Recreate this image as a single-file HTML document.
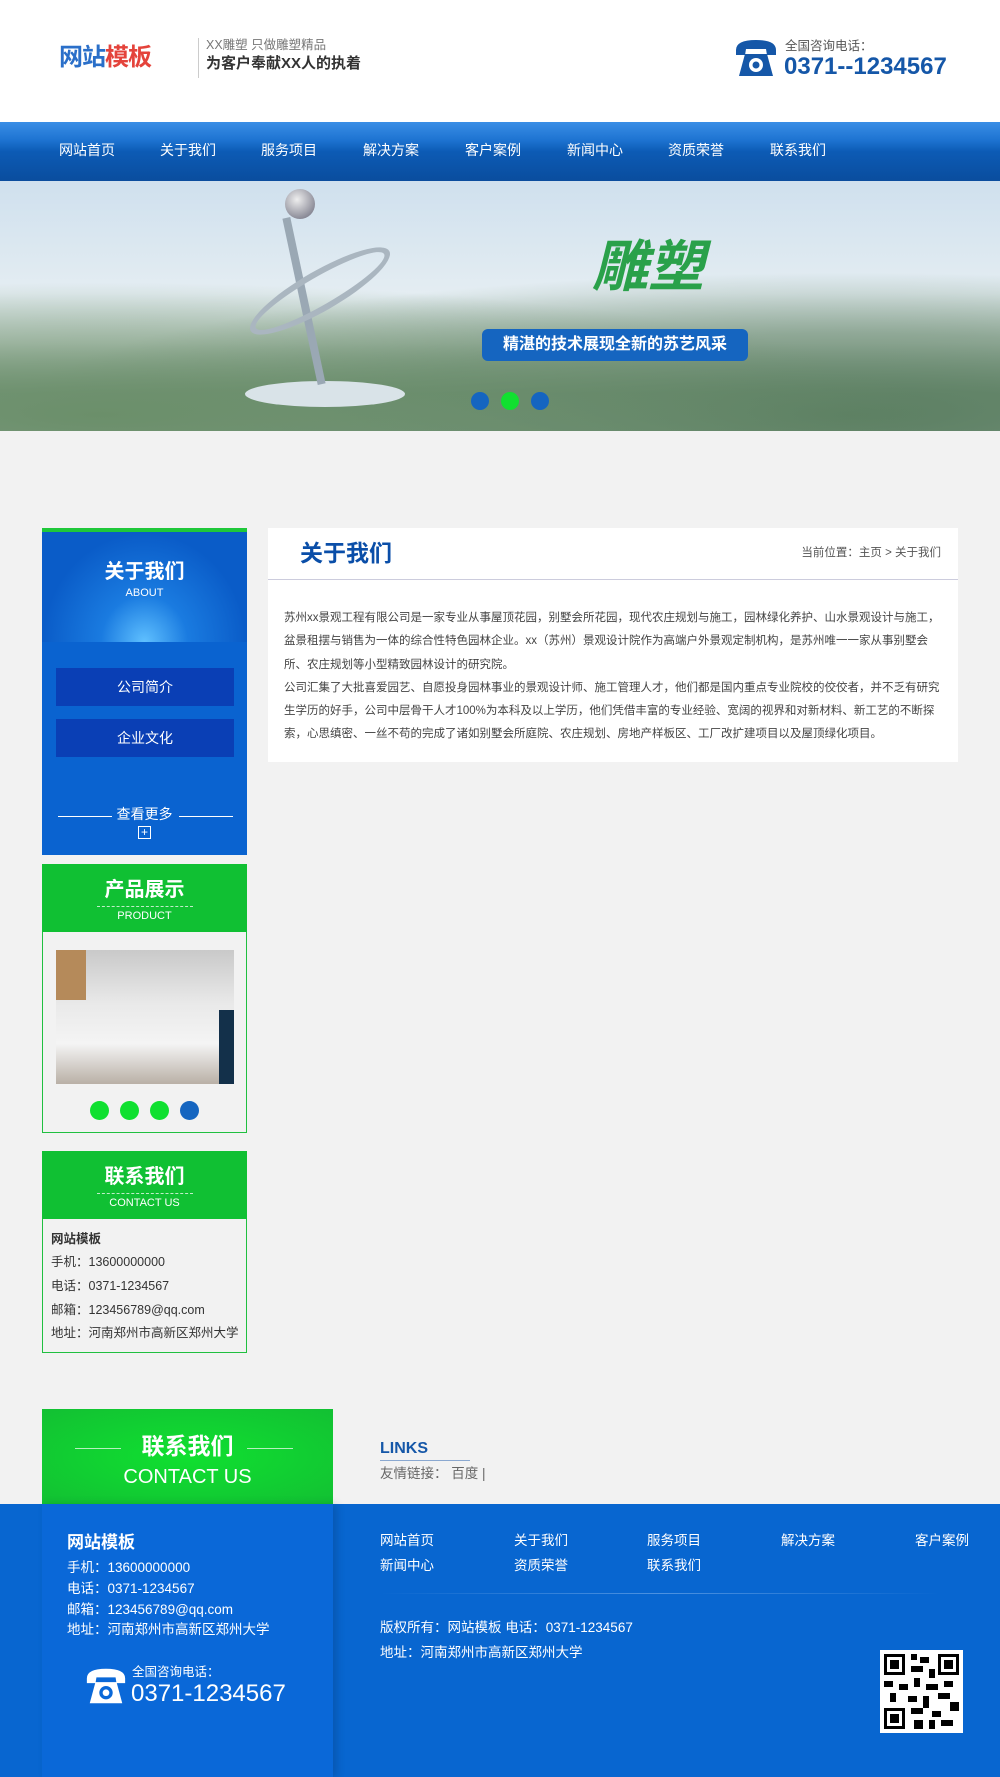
<!DOCTYPE html>
<html><head><meta charset="utf-8"><style>
*{margin:0;padding:0;box-sizing:border-box}
body{width:1000px;height:1777px;background:#f2f2f2;font-family:"Liberation Sans","Noto Sans CJK SC",sans-serif;position:relative;overflow:hidden}
.a{position:absolute;white-space:nowrap;line-height:1.2}
.hdr{left:0;top:0;width:1000px;height:122px;background:#fff}
.nav{left:0;top:122px;width:1000px;height:59px;background:linear-gradient(#3a8ee6 0,#1e74d2 30%,#0c5bb5 50%,#0a4d9e 100%)}
.nav span{position:absolute;top:20px;color:#fff;font-size:14px}
.ban{left:0;top:181px;width:1000px;height:250px;background:linear-gradient(180deg,#cfe0ee 0,#e4edf2 45%,#c9d6d0 65%,#7f9c86 85%,#8fa89a 100%);overflow:hidden}
.side{left:42px;width:205px}
.w{color:#fff}
.ct{color:#333;font-size:12.5px}
.fn span{position:absolute;color:#fff;font-size:13.5px;white-space:nowrap}
</style></head><body>
<div class="a hdr">
 <div class="a" style="left:59px;top:44px;font-size:24px;font-weight:bold;letter-spacing:-1px"><span style="color:#2a6fc9">网站</span><span style="color:#e4433b">模板</span></div>
 <div class="a" style="left:198px;top:38px;width:1px;height:40px;background:#ccc"></div>
 <div class="a" style="left:206px;top:38px;font-size:12.5px;color:#777">XX雕塑 只做雕塑精品</div>
 <div class="a" style="left:206px;top:55px;font-size:15px;color:#333;font-weight:bold">为客户奉献XX人的执着</div>
 <svg class="a" style="left:733px;top:38px" width="46" height="40" viewBox="0 0 46 40"><path d="M3 12 Q3 2 23 2 Q43 2 43 12 L43 17 L34 17 L33 11 L13 11 L12 17 L3 17Z" fill="#1557a8"/><path d="M12 16 L34 16 L40 38 L6 38Z" fill="#1557a8"/><circle cx="23" cy="27" r="7" fill="#fff"/><circle cx="23" cy="27" r="3.5" fill="#1557a8"/></svg>
 <div class="a" style="left:785px;top:39px;font-size:12.5px;color:#555">全国咨询电话：</div>
 <div class="a" style="left:784px;top:55px;font-size:24px;line-height:1;color:#1557a8;font-weight:bold">0371--1234567</div>
</div>
<div class="a nav"><span style="left:59px">网站首页</span><span style="left:160px">关于我们</span><span style="left:261px">服务项目</span><span style="left:363px">解决方案</span><span style="left:465px">客户案例</span><span style="left:567px">新闻中心</span><span style="left:668px">资质荣誉</span><span style="left:770px">联系我们</span></div>
<div class="a ban">
 <div class="a" style="left:0;top:90px;width:1000px;height:160px;background:radial-gradient(ellipse at 10% 90%,#6b8f6a 0,rgba(107,143,106,.5) 35%,transparent 65%),radial-gradient(ellipse at 85% 90%,#5c7f62 0,rgba(92,127,98,.55) 40%,transparent 70%)"></div>
 <div class="a" style="left:245px;top:200px;width:160px;height:26px;border-radius:50%;background:#d9e3e8"></div>
 <div class="a" style="left:285px;top:8px;width:30px;height:30px;border-radius:50%;background:radial-gradient(circle at 40% 35%,#eee,#667)"></div>
 <div class="a" style="left:300px;top:35px;width:8px;height:170px;background:#9aa8b4;transform:rotate(-12deg)"></div>
 <div class="a" style="left:240px;top:90px;width:160px;height:40px;border:6px solid #aab6c0;border-radius:50%;transform:rotate(-30deg)"></div>
 <div class="a" style="left:592px;top:52px;font-size:56px;font-weight:bold;color:#2aa14a;font-style:italic">雕塑</div>
 <div class="a" style="left:482px;top:148px;width:266px;height:32px;background:#1565c0;border-radius:6px;color:#fff;font-size:16px;text-align:center;line-height:32px;font-weight:bold">精湛的技术展现全新的苏艺风采</div>
 <div class="a" style="left:471px;top:211px;width:18px;height:18px;border-radius:50%;background:#1565c0"></div>
 <div class="a" style="left:501px;top:211px;width:18px;height:18px;border-radius:50%;background:#11e030"></div>
 <div class="a" style="left:531px;top:211px;width:18px;height:18px;border-radius:50%;background:#1565c0"></div>
</div>
<!-- about side -->
<div class="a side" style="top:528px;height:327px;background:#0a63d0;border-top:4px solid #1fc83a">
 <div class="a" style="left:0;top:0;width:205px;height:110px;background:radial-gradient(ellipse at 50% 100%,#5fc0ff 0,#1a7be0 30%,#0a5cc8 70%)"></div>
 <div class="a w" style="left:0;width:205px;text-align:center;top:28px;font-size:20px;font-weight:bold">关于我们</div>
 <div class="a w" style="left:0;width:205px;text-align:center;top:55px;font-size:11px">ABOUT</div>
 <div class="a w" style="left:14px;top:136px;width:178px;height:38px;background:#0a3fb5;text-align:center;line-height:38px;font-size:14px">公司简介</div>
 <div class="a w" style="left:14px;top:187px;width:178px;height:38px;background:#0a3fb5;text-align:center;line-height:38px;font-size:14px">企业文化</div>
 <div class="a" style="left:16px;top:284px;width:54px;height:1px;background:#fff"></div>
 <div class="a" style="left:137px;top:284px;width:54px;height:1px;background:#fff"></div>
 <div class="a w" style="left:0;width:205px;text-align:center;top:274px;font-size:14px">查看更多</div>
 <div class="a w" style="left:96px;top:294px;width:13px;height:13px;border:1px solid #fff;font-size:12px;line-height:11px;text-align:center">+</div>
</div>
<!-- product -->
<div class="a side" style="top:864px;height:269px;background:#f2f2f2;border:1px solid #20c040">
 <div class="a" style="left:-1px;top:-1px;width:205px;height:68px;background:#10c033"></div>
 <div class="a w" style="left:0;width:203px;text-align:center;top:13px;font-size:20px;font-weight:bold">产品展示</div>
 <div class="a" style="left:54px;top:41px;width:96px;border-top:1px dashed #bfeec8"></div>
 <div class="a w" style="left:0;width:203px;text-align:center;top:45px;font-size:11px">PRODUCT</div>
 <div class="a" style="left:13px;top:85px;width:178px;height:134px;background:linear-gradient(#c9c9c9 0,#e9e9e9 40%,#f4f4f4 70%,#b9b0a6 100%)"></div>
 <div class="a" style="left:13px;top:85px;width:30px;height:50px;background:#b58a5a"></div>
 <div class="a" style="left:176px;top:145px;width:15px;height:74px;background:#13304a"></div>
 <div class="a" style="left:47px;top:236px;width:19px;height:19px;border-radius:50%;background:#10e030"></div>
 <div class="a" style="left:77px;top:236px;width:19px;height:19px;border-radius:50%;background:#10e030"></div>
 <div class="a" style="left:107px;top:236px;width:19px;height:19px;border-radius:50%;background:#10e030"></div>
 <div class="a" style="left:137px;top:236px;width:19px;height:19px;border-radius:50%;background:#1565c0"></div>
</div>
<!-- contact -->
<div class="a side" style="top:1151px;height:202px;background:#f2f2f2;border:1px solid #20c040">
 <div class="a" style="left:-1px;top:-1px;width:205px;height:68px;background:#10c033"></div>
 <div class="a w" style="left:0;width:203px;text-align:center;top:13px;font-size:20px;font-weight:bold">联系我们</div>
 <div class="a" style="left:54px;top:41px;width:96px;border-top:1px dashed #bfeec8"></div>
 <div class="a w" style="left:0;width:203px;text-align:center;top:45px;font-size:11px">CONTACT US</div>
 <div class="a ct" style="left:8px;top:80px;font-weight:bold">网站模板</div>
 <div class="a ct" style="left:8px;top:103px">手机：13600000000</div>
 <div class="a ct" style="left:8px;top:127px">电话：0371-1234567</div>
 <div class="a ct" style="left:8px;top:151px">邮箱：123456789@qq.com</div>
 <div class="a ct" style="left:8px;top:174px">地址：河南郑州市高新区郑州大学</div>
</div>
<!-- main -->
<div class="a" style="left:268px;top:528px;width:690px;height:234px;background:#fff">
 <div class="a" style="left:0;top:51px;width:690px;height:1px;background:#ccd"></div>
 <div class="a" style="left:32px;top:12px;font-size:23px;font-weight:bold;color:#0a4ea8">关于我们</div>
 <div class="a" style="right:17px;top:19px;font-size:11.5px;color:#555">当前位置：主页 &gt; 关于我们</div>
 <div class="a" style="left:16px;top:79px;width:664px;white-space:normal;font-size:11.5px;line-height:23.3px;color:#444">苏州xx景观工程有限公司是一家专业从事屋顶花园，别墅会所花园，现代农庄规划与施工，园林绿化养护、山水景观设计与施工，盆景租摆与销售为一体的综合性特色园林企业。xx（苏州）景观设计院作为高端户外景观定制机构，是苏州唯一一家从事别墅会所、农庄规划等小型精致园林设计的研究院。<br>公司汇集了大批喜爱园艺、自愿投身园林事业的景观设计师、施工管理人才，他们都是国内重点专业院校的佼佼者，并不乏有研究生学历的好手，公司中层骨干人才100%为本科及以上学历，他们凭借丰富的专业经验、宽阔的视界和对新材料、新工艺的不断探索，心思缜密、一丝不苟的完成了诸如别墅会所庭院、农庄规划、房地产样板区、工厂改扩建项目以及屋顶绿化项目。</div>
</div>
<!-- footer -->
<div class="a" style="left:0;top:1504px;width:1000px;height:273px;background:#0866d0"></div>
<div class="a" style="left:42px;top:1409px;width:291px;height:95px;background:radial-gradient(ellipse at 50% 50%,#10e030,#12c033)">
 <div class="a" style="left:33px;top:39px;width:46px;height:1px;background:#b7f0bf"></div>
 <div class="a" style="left:205px;top:39px;width:46px;height:1px;background:#b7f0bf"></div>
 <div class="a w" style="left:0;width:291px;text-align:center;top:24px;font-size:23px;font-weight:bold">联系我们</div>
 <div class="a w" style="left:0;width:291px;text-align:center;top:56px;font-size:20px">CONTACT US</div>
</div>
<div class="a" style="left:42px;top:1504px;width:291px;height:273px;background:#0a68d8;box-shadow:4px 0 8px rgba(0,0,0,.15)">
 <div class="a w" style="left:25px;top:29px;font-size:17px;font-weight:bold">网站模板</div>
 <div class="a w" style="left:25px;top:56px;font-size:13.5px">手机：13600000000</div>
 <div class="a w" style="left:25px;top:77px;font-size:13.5px">电话：0371-1234567</div>
 <div class="a w" style="left:25px;top:98px;font-size:13.5px">邮箱：123456789@qq.com</div>
 <div class="a w" style="left:25px;top:118px;font-size:13.5px">地址：河南郑州市高新区郑州大学</div>
 <svg class="a" style="left:42px;top:162px" width="44" height="40" viewBox="0 0 46 40"><path d="M3 12 Q3 2 23 2 Q43 2 43 12 L43 17 L34 17 L33 11 L13 11 L12 17 L3 17Z" fill="#fff"/><path d="M12 16 L34 16 L40 38 L6 38Z" fill="#fff"/><circle cx="23" cy="27" r="7" fill="#0a68d8"/><circle cx="23" cy="27" r="3.5" fill="#fff"/></svg>
 <div class="a w" style="left:90px;top:161px;font-size:12.5px">全国咨询电话：</div>
 <div class="a w" style="left:89px;top:178px;font-size:24px;line-height:1">0371-1234567</div>
</div>
<div class="a" style="left:380px;top:1439px;font-size:16px;font-weight:bold;color:#1557a8">LINKS</div>
<div class="a" style="left:380px;top:1460px;width:90px;height:1px;background:#8aa8d0"></div>
<div class="a" style="left:380px;top:1466px;font-size:13.5px;color:#666">友情链接： 百度 |</div>
<div class="a fn" style="left:0;top:0;width:1000px;height:1px">
 <span style="left:380px;top:1533px">网站首页</span><span style="left:514px;top:1533px">关于我们</span><span style="left:647px;top:1533px">服务项目</span><span style="left:781px;top:1533px">解决方案</span><span style="left:915px;top:1533px">客户案例</span>
 <span style="left:380px;top:1558px">新闻中心</span><span style="left:514px;top:1558px">资质荣誉</span><span style="left:647px;top:1558px">联系我们</span>
 <span style="left:380px;top:1620px">版权所有：网站模板 电话：0371-1234567</span>
 <span style="left:380px;top:1645px">地址：河南郑州市高新区郑州大学</span>
</div>
<div class="a" style="left:380px;top:1593px;width:560px;height:1px;background:linear-gradient(90deg,transparent,#4d92e0,transparent)"></div>
<div class="a" style="left:880px;top:1650px;width:83px;height:83px;background:#fff;padding:4px">
 <svg width="75" height="75" viewBox="0 0 25 25" shape-rendering="crispEdges"><rect x="0" y="0" width="7" height="7" fill="#000"/><rect x="1" y="1" width="5" height="5" fill="#fff"/><rect x="2" y="2" width="3" height="3" fill="#000"/><rect x="18" y="0" width="7" height="7" fill="#000"/><rect x="19" y="1" width="5" height="5" fill="#fff"/><rect x="20" y="2" width="3" height="3" fill="#000"/><rect x="0" y="18" width="7" height="7" fill="#000"/><rect x="1" y="19" width="5" height="5" fill="#fff"/><rect x="2" y="20" width="3" height="3" fill="#000"/><path d="M9 0h2v2h-2zM12 1h3v2h-3zM9 4h4v2h-4zM15 5h2v3h-2zM0 9h3v2h-3zM5 10h3v2h-3zM10 8h2v3h-2zM14 10h4v2h-4zM20 9h3v2h-3zM2 13h2v3h-2zM8 14h3v2h-3zM13 14h2v4h-2zM18 13h4v2h-4zM22 16h3v3h-3zM9 18h4v2h-4zM16 19h3v2h-3zM10 22h3v3h-3zM15 22h2v3h-2zM19 22h4v2h-4z" fill="#000"/></svg>
</div>
</body></html>
